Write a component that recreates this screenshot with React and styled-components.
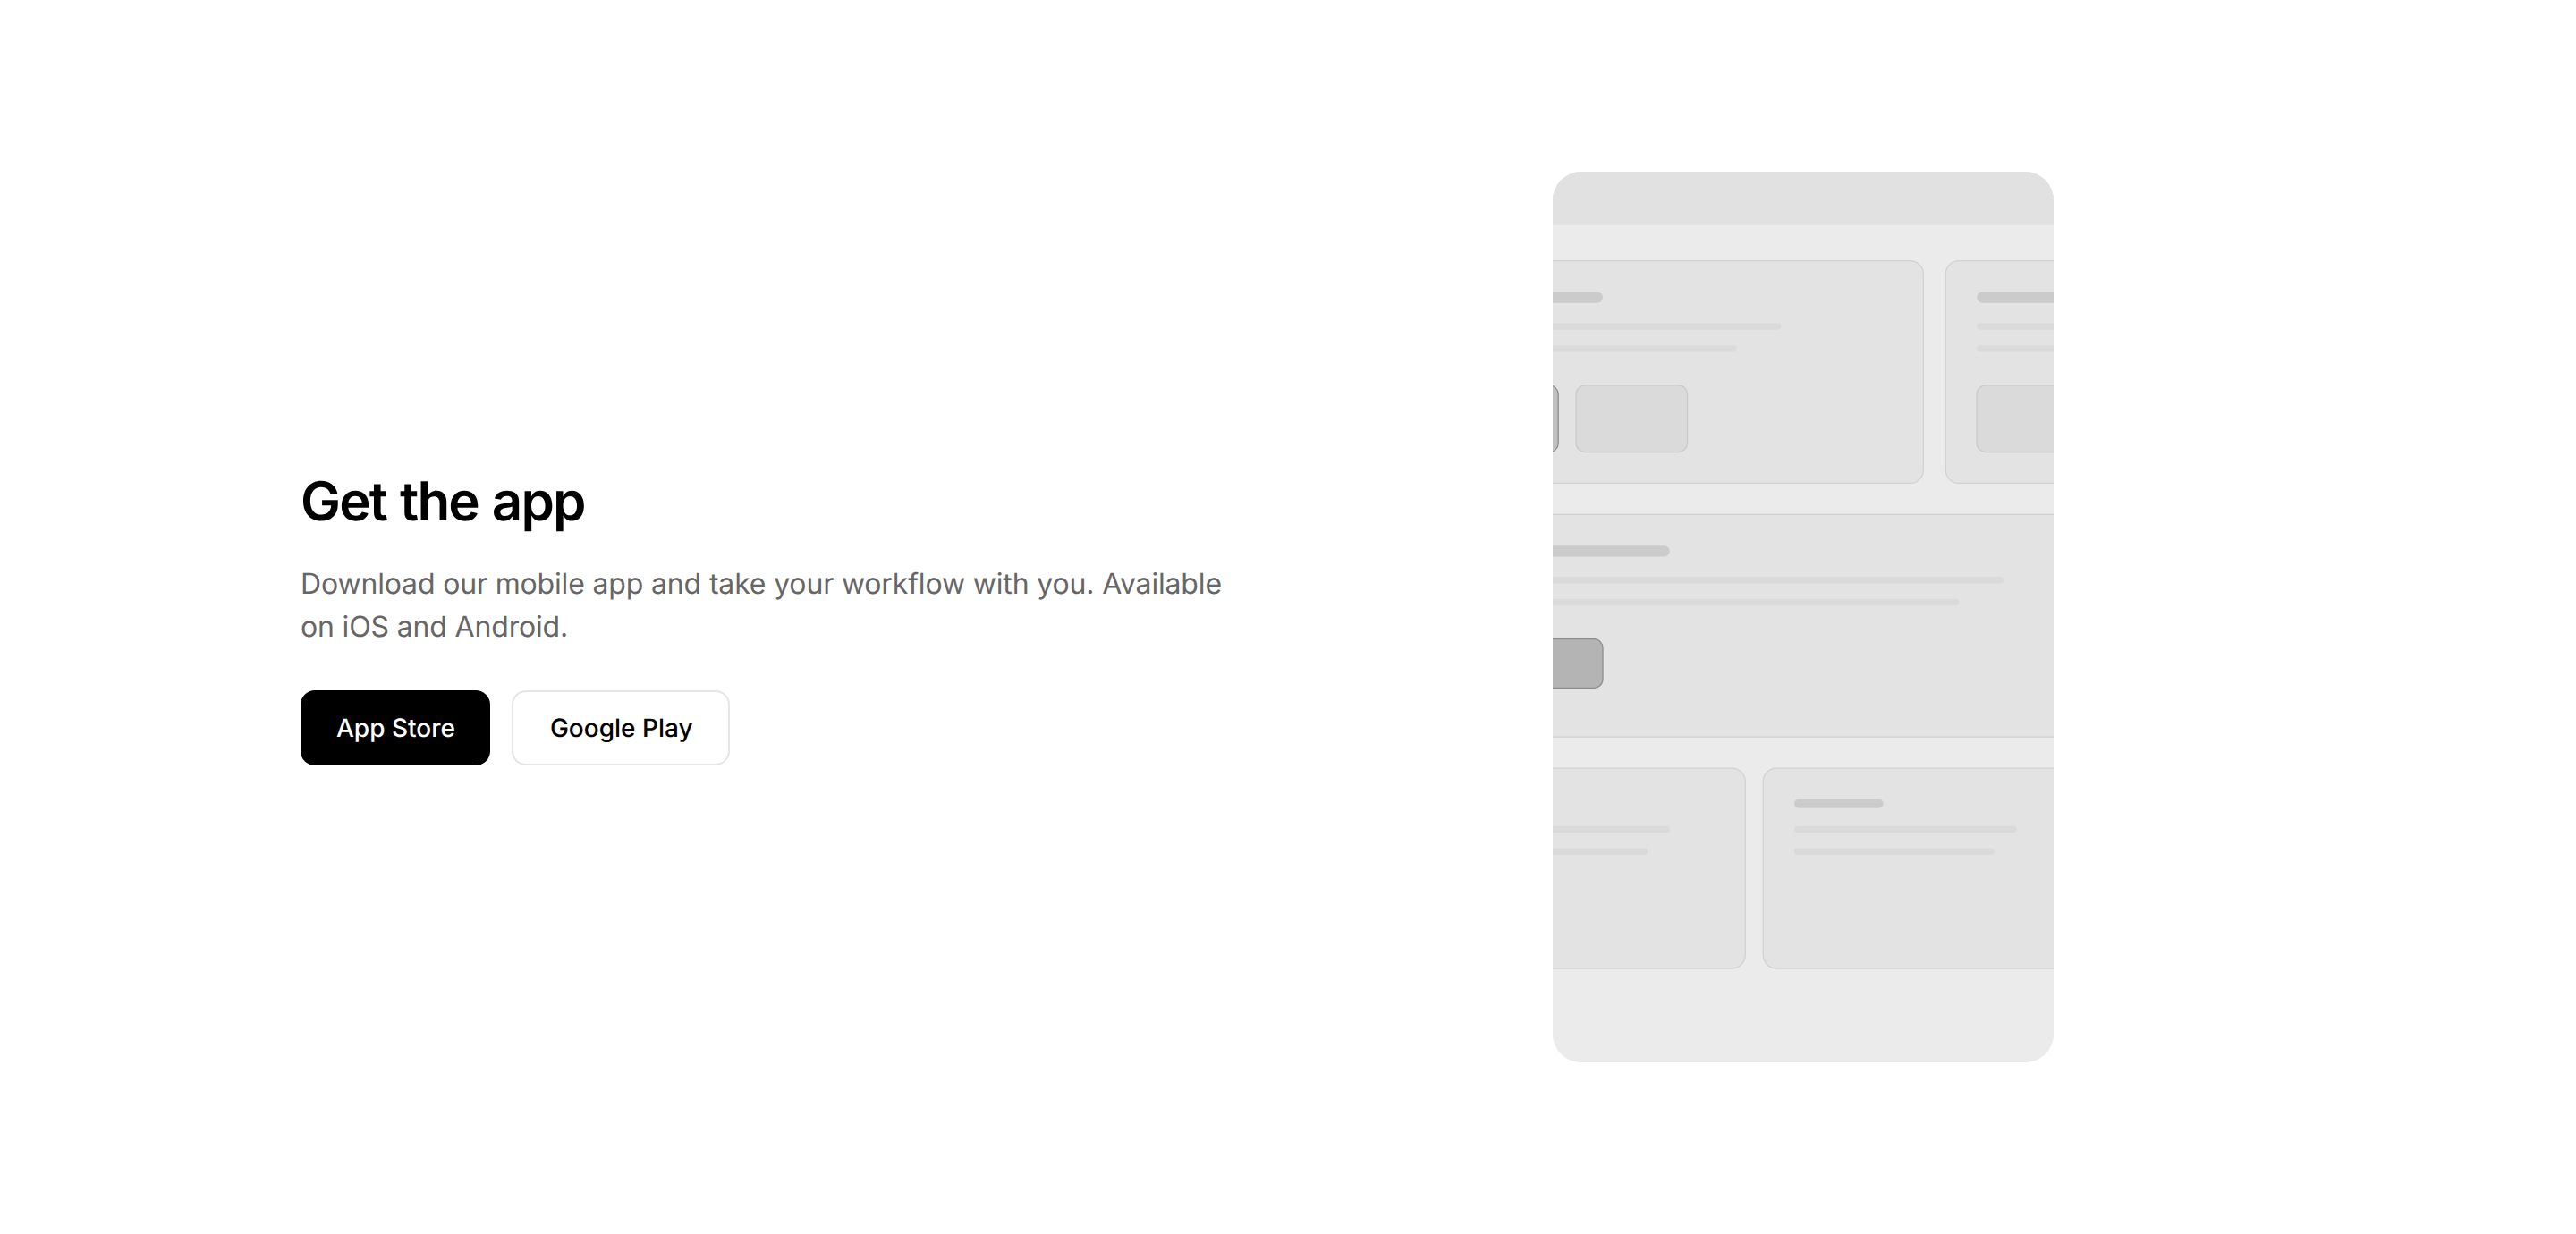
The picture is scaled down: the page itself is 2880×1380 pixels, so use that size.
import React from "react";
import styled, { createGlobalStyle } from "styled-components";

const GlobalStyle = createGlobalStyle`
  * {
    box-sizing: border-box;
  }

  body {
    margin: 0;
    background-color: #ffffff;
    font-family: Inter, "Liberation Sans", sans-serif;
    text-rendering: geometricPrecision;
    -webkit-font-smoothing: antialiased;
  }
`;

const Section = styled.section`
  width: 100%;
  height: 100vh;
  padding: 0 336px;

  display: grid;
  grid-template-columns: 1fr 1fr;
  gap: 96px;
  align-items: center;
`;

const Content = styled.div`
  display: flex;
  flex-direction: column;
`;

const Title = styled.h2`
  margin: 0 0 32px;
  padding-top: 1px;

  color: #000000;
  font-size: 60px;
  font-weight: 600;
  line-height: 72px;
  letter-spacing: -0.03em;
  word-spacing: 1.4px;
`;

const Description = styled.p`
  margin: 0 0 47px;

  color: #666666;
  font-size: 32px;
  line-height: 48px;
  letter-spacing: -0.005em;
`;

const ButtonWrap = styled.div`
  display: flex;
  gap: 24px;
`;

const StoreButton = styled.button`
  height: 84px;
  padding: ${({ $primary }) => ($primary ? "0 39px 0 40px" : "0 39px 0 41px")};

  color: ${({ $primary }) => ($primary ? "#ffffff" : "#000000")};
  background-color: ${({ $primary }) => ($primary ? "#000000" : "#ffffff")};
  border: ${({ $primary }) => ($primary ? "none" : "2px solid #e5e5e5")};
  border-radius: 16px;

  font-family: inherit;
  font-size: 28px;
  font-weight: 500;
  text-rendering: inherit;
  cursor: pointer;
`;

const PhoneWrap = styled.div`
  display: flex;
  justify-content: center;
`;

const Phone = styled.div`
  width: 560px;
  aspect-ratio: 9 / 16;

  border-radius: 32px;
  background-color: #ebebeb;
  overflow: hidden;
`;

const Drawing = styled.svg`
  width: 100%;
  height: 100%;
  display: block;
`;

const cards = [
  { x: 150, y: 40, width: 204, height: 100 },
  { x: 364, y: 40, width: 204, height: 100 },
  { x: 150, y: 154, width: 420, height: 100 },
  { x: 126, y: 268, width: 148, height: 90 },
  { x: 282, y: 268, width: 148, height: 90 },
];

const titles = [
  { x: 164, y: 54, width: 46, height: 5 },
  { x: 378, y: 54, width: 60, height: 5 },
  { x: 164, y: 168, width: 76, height: 5 },
  { x: 296, y: 282, width: 40, height: 4 },
];

const lines = [
  { x: 164, y: 68, width: 126 },
  { x: 164, y: 78, width: 106 },
  { x: 378, y: 68, width: 120 },
  { x: 378, y: 78, width: 100 },
  { x: 164, y: 182, width: 226 },
  { x: 164, y: 192, width: 206 },
  { x: 140, y: 294, width: 100 },
  { x: 140, y: 304, width: 90 },
  { x: 296, y: 294, width: 100 },
  { x: 296, y: 304, width: 90 },
];

const buttons = [
  { x: 140, y: 96, width: 50, height: 30, fill: "#c0c0c0", stroke: "#8c8c8c" },
  { x: 198, y: 96, width: 50, height: 30, fill: "#dadada", stroke: "#c9c9c9" },
  { x: 378, y: 96, width: 50, height: 30, fill: "#dadada", stroke: "#c9c9c9" },
  { x: 150, y: 210, width: 60, height: 22, fill: "#b4b4b4", stroke: "#8c8c8c" },
];

function Wireframe() {
  return (
    <Drawing viewBox="0 0 600 400" preserveAspectRatio="xMidYMid slice">
      <rect width="600" height="400" fill="#ebebeb" />
      <rect width="600" height="24" fill="#e1e1e1" />
      {cards.map((card, i) => (
        <rect key={i} {...card} rx="6" fill="#e3e3e3" stroke="#d1d1d1" strokeWidth="0.5" />
      ))}
      {titles.map((title, i) => (
        <rect key={i} {...title} rx={title.height / 2} fill="#cbcbcb" />
      ))}
      {lines.map((line, i) => (
        <rect key={i} {...line} height="3" rx="1.5" fill="#dadada" />
      ))}
      {buttons.map((button, i) => (
        <rect key={i} {...button} rx="4" strokeWidth="0.5" />
      ))}
    </Drawing>
  );
}

export default function App() {
  return (
    <>
      <GlobalStyle />
      <Section>
        <Content>
          <Title>Get the app</Title>
          <Description>
            Download our mobile app and take your workflow with you. Available
            on iOS and Android.
          </Description>
          <ButtonWrap>
            <StoreButton $primary>App Store</StoreButton>
            <StoreButton>Google Play</StoreButton>
          </ButtonWrap>
        </Content>
        <PhoneWrap>
          <Phone>
            <Wireframe />
          </Phone>
        </PhoneWrap>
      </Section>
    </>
  );
}
